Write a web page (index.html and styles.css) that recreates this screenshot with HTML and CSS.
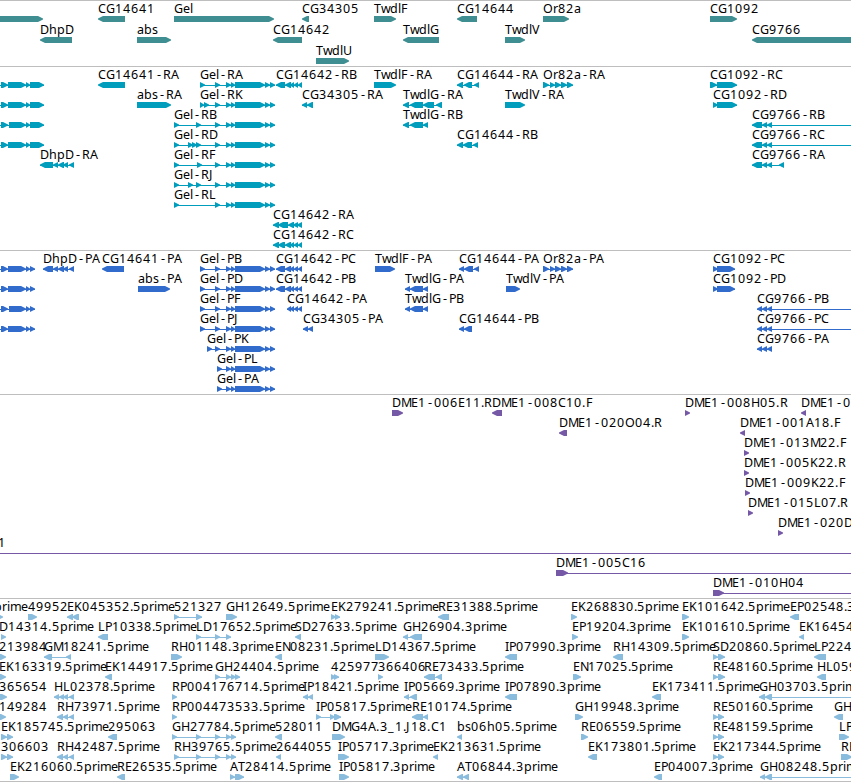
FILE: index.html
```html
<!DOCTYPE html>
<html lang="en">
<head>
    <meta charset="utf-8">
    <title>Genome Browser</title>
    <link rel="stylesheet" href="styles.css">
</head>
<body>
    <div class="browser">
        <div class="track track-gene" id="gene"></div>
        <div class="track track-mrna" id="mrna"></div>
        <div class="track track-cds" id="cds"></div>
        <div class="track track-bac" id="bac"></div>
        <div class="track track-est" id="est"></div>
    </div>

    <script src="tracks.js"></script>
</body>
</html>
```
FILE: styles.css
```css
body {
    margin: 0;
    padding: 0;
    background-color: #fff;
    overflow: hidden;
}

.browser {
    display: flex;
    flex-direction: column;
    width: 851px;
    height: 782px;
    overflow: hidden;
}

.track {
    box-sizing: border-box;
    border-top: 1px solid #bebebe;
    overflow: hidden;
}

.track svg {
    display: block;
    width: 851px;
    height: 100%;
}

.track text {
    font-family: "Noto Sans", "DejaVu Sans", sans-serif;
    font-size: 12.5px;
    fill: #000;
}

.track-gene {
    height: 66px;
    color: #3f8f92;
}

.track-mrna {
    height: 184px;
    color: #009dbd;
}

.track-cds {
    height: 144px;
    color: #316ccc;
}

.track-bac {
    height: 204px;
    color: #7558a6;
}

.track-est {
    height: 184px;
    color: #89bcdd;
    border-bottom: 1px solid #bebebe;
}

.block {
    fill: currentColor;
}

.intron {
    stroke: currentColor;
    stroke-width: 1;
    shape-rendering: crispEdges;
}
```
FILE: tracks.js
```js
// each line: row label strand blocks   ("." = no label, label@x = label not at feature start)
const tracks = {
    gene: `
0 . + -10-43
0 CG14641 - 98-125
0 Gel + 174-274
0 CG34305 - 302-309
0 TwdlF + 374-396
0 CG14644 - 457-477
0 Or82a + 543-569
0 CG1092 + 710-737
1 DhpD - 40-72
1 abs + 137-171
1 CG14642 - 273-302
1 TwdlG - 403-439
1 TwdlV + 505-525
1 CG9766 - 752-870
2 TwdlU + 316-349`,
    mrna: `
0 . + -10--5 1-8 8-26 26-30 30-44
1 . + -10--5 1-8 8-26 26-30 30-44
2 . + -10--5 1-8 9-26 26-30 30-44
3 . + -10--5 1-8 8-26 26-30 30-44
0 CG14641-RA - 98-125
0 Gel-RA + 200-205 215-220 226-231 231-235 235-265 265-270 270-275
0 CG14642-RB - 276-285 285-291 290-294 294-298 298-302
0 TwdlF-RA + 374-396
0 CG14644-RA - 457-463 464-472 474-479
0 Or82a-RA + 543-549 550-555 555-561 561-567 567-573
0 CG1092-RC + 710-717 717-737
1 abs-RA + 137-171
1 Gel-RK + 200-204 204-209 215-220 226-231 231-235 235-265 265-270 270-275
1 CG34305-RA - 302-307 307-313
1 TwdlG-RA - 403-409 410-423 423-434 436-442
1 TwdlV-RA + 505-525
1 CG1092-RD + 713-718 717-737
2 Gel-RB + 174-179 196-201 215-220 226-231 231-235 235-265 265-270 270-275
2 TwdlG-RB - 403-409 410-423 423-428
2 CG9766-RB - 752-762 762-767 767-772 860-865
3 Gel-RD + 174-179 188-193 192-197 196-201 215-220 226-231 231-235 235-265 265-270 270-275
3 CG14644-RB - 457-463 463-472 473-478
3 CG9766-RC - 752-762 762-767 767-772 860-865
4 DhpD-RA - 40-53 53-58 58-64 63-68 69-74
4 Gel-RF + 174-179 197-202 215-220 226-231 231-235 235-265 265-270 270-275
4 CG9766-RA - 752-762 762-767 767-772 779-784
5 Gel-RJ + 174-179 188-193 196-201 215-220 226-231 231-235 235-265 265-270 270-275
6 Gel-RL + 174-179 215-220 226-231 231-235 235-265 265-270 270-275
7 CG14642-RA - 273-279 278-288 288-294 293-298 297-302
8 CG14642-RC - 273-279 278-285 285-291 290-294 294-298 298-302`,
    cds: `
0 . + -10--5 1-8 8-26 26-30 30-35
1 . + -10--5 1-8 8-26 26-30 30-35
2 . + -10--5 1-8 9-26 26-30 30-35
3 . + -10--5 1-8 8-26 26-30 30-35
0 DhpD-PA - 43-53 53-58 58-64 63-68 69-74
0 CG14641-PA - 102-124
0 Gel-PB + 200-205 215-220 226-231 231-235 235-265 265-270 270-275
0 CG14642-PC - 276-285 285-291 290-294 294-298 298-302
0 TwdlF-PA + 375-395
0 CG14644-PA - 459-464 464-473 474-479
0 Or82a-PA + 543-549 550-555 555-561 561-567 567-573
0 CG1092-PC + 713-718 717-735
1 abs-PA + 138-170
1 Gel-PD + 200-205 215-220 226-231 231-235 235-265 265-270 270-275
1 CG14642-PB - 276-285 285-291 290-294 294-298 298-302
1 TwdlG-PA - 405-410 410-423 423-428
1 TwdlV-PA + 506-520
1 CG1092-PD + 713-718 717-735
2 Gel-PF + 200-205 215-220 226-231 231-235 235-265 265-270 270-275
2 CG14642-PA - 287-291 290-294 294-298 298-302
2 TwdlG-PB - 405-410 410-423 423-428
2 CG9766-PB - 757-762 762-767 767-772 860-865
3 Gel-PJ + 200-205 215-220 226-231 231-235 235-265 265-270 270-275
3 CG34305-PA - 303-308 308-313
3 CG14644-PB - 459-464 464-472
3 CG9766-PC - 757-762 762-767 767-772 860-865
4 Gel-PK + 207-212 215-220 226-231 231-235 235-265 265-270 270-275
4 CG9766-PA - 757-762 762-767 767-772
5 Gel-PL + 217-222 226-231 231-235 235-265 265-270 270-275
6 Gel-PA + 217-222 226-231 231-235 235-265 265-270 270-275`,
    bac: `
0 DME1-006E11.R + 392-403
0 DME1-008C10.F - 492-502
0 DME1-008H05.R + 685-690
0 DME1-0 - 801-806
1 DME1-020O04.R - 559-567
1 DME1-001A18.F - 740-745
2 DME1-013M22.F + 744-749
3 DME1-005K22.R + 744-749
4 DME1-009K22.F + 745-750
5 DME1-015L07.R + 748-753
6 DME1-020D + 778-783
7 1@-2 + -10--5 860-865
8 DME1-005C16 + 556-568 860-865
9 DME1-010H04 + 713-724 860-865`,
    est: `
0 prime@-6 + -5-3
0 49952 + 28-37
0 EK045352.5prime - 67-73 72-79
0 521327 + 174-179 196-202
0 GH12649.5prime + 226-237
0 EK279241.5prime + 331-336 335-340
0 RE31388.5prime - 438-449
0 EK268830.5prime + 571-577
0 EK101642.5prime + 682-689
0 EP02548.3 - 790-799
1 D14314.5prime@-1 + 1-6
1 LP10338.5prime - 98-108
1 LD17652.5prime + 196-201 215-220 226-231
1 SD27633.5prime - 295-301
1 GH26904.3prime - 403-408 410-422
1 EP19204.3prime + 572-578
1 EK101610.5prime + 682-689
1 EK16454 - 799-804
2 213984@-1 + 0-6
2 GM18241.5prime - 44-52 66-71
2 RH01148.3prime + 171-182
2 EN08231.5prime - 275-282
2 LD14367.5prime + 375-389
2 IP07990.3prime - 505-517
2 RH14309.5prime - 613-623
2 SD20860.5prime + 713-718 718-725
2 LP224 - 814-826
3 EK163319.5prime@-1 + 0-6
3 EK144917.5prime - 105-112
3 GH24404.5prime + 215-220 226-231 231-236 235-240
3 425977 + 331-336 334-339
3 366406 + 378-383
3 RE73433.5prime - 424-435 436-442
3 EN17025.5prime + 573-581
3 RE48160.5prime + 713-718 718-725
3 HL059 - 817-826
4 365654@-1 + 0-7
4 HL02378.5prime - 54-59 59-64 63-68 69-74
4 RP004176714.5prime + 172-177
4 IP18421.5prime - 303-308 308-313
4 IP05669.3prime - 404-409 410-417
4 IP07890.3prime - 505-517
4 EK173411.5prime - 652-661
4 GH03703.5prim - 759-765 765-772 860-865
5 149284@-1 + 0-6
5 RH73971.5prime - 57-63 63-68 69-74
5 RP004473533.5prime + 172-177
5 IP05817.5prime + 316-321 330-335 334-341
5 RE10174.5prime - 412-423 423-428
5 GH19948.3prime + 575-583
5 RE50160.5prime + 713-718 718-724
5 GH - 834-843
6 EK185745.5prime + 1-7 7-13
6 295063 - 108-117
6 GH27784.5prime + 172-177 196-201 215-220 226-231 231-236
6 528011 - 275-282
6 DMG4A.3_1.J18.C1 + 332-345
6 bs06h05.5prime - 457-462
6 RE06559.5prime + 581-588
6 RE48159.5prime + 713-718 718-724
6 LP + 839-849
7 306603 + 1-7 7-13
7 RH42487.5prime - 57-63 63-68 69-74
7 RH39765.5prime + 174-179 196-201 215-220 226-231 231-236
7 2644055 - 276-281
7 IP05717.3prime + 338-349
7 EK213631.5prime - 433-438
7 EK173801.5prime - 588-597
7 EK217344.5prime + 713-718 718-724
7 RE + 841-852
8 EK216060.5prime + 10-19
8 RE26535.5prime - 117-125
8 AT28414.5prime + 230-235 235-244
8 IP05817.3prime + 339-349
8 AT06844.3prime - 457-463 463-469
8 EP04007.3prime - 654-662
8 GH08248.5prim - 760-765 765-772 860-865`
};

// label letter widths in px, everything else is 8
const widths = { C: 8, G: 9, D: 9, E: 6.6, L: 6.6, F: 7, T: 7, P: 7, I: 3.5, J: 5, H: 9, M: 10.4, O: 9.5, S: 7, U: 8,
                 e: 7, l: 3, r: 5, i: 3, m: 11, w: 9, a: 7, s: 6, ".": 3.5, "_": 7 };

function labelPositions(label, x) {
    const list = [];
    for (const ch of label) {
        // the hyphen glyph is narrow, centre it in its cell
        list.push(Math.round(ch === "-" ? x + 2 : x));
        x += widths[ch] || 8;
    }
    return list.join(" ");
}

// a block is a bar with a 5px arrow head on the strand side
function blockPoints(a, b, y, strand) {
    const head = Math.min(5, b - a);
    if (strand === "+") {
        return `${a},${y} ${b - head},${y} ${b},${y + 2.6} ${b},${y + 3.4} ${b - head},${y + 6} ${a},${y + 6}`;
    }
    return `${b},${y} ${a + head},${y} ${a},${y + 2.6} ${a},${y + 3.4} ${a + head},${y + 6} ${b},${y + 6}`;
}

function drawTrack(id) {
    const rowHeight = id === "gene" ? 21 : 20;
    let out = "";
    tracks[id].trim().split("\n").forEach(line => {
        const [row, name, strand, ...rest] = line.split(" ");
        const blocks = rest.map(r => r.match(/^(-?\d+)-(-?\d+)$/).slice(1).map(Number));
        const [label, at] = name.split("@");
        const y = row * rowHeight + 15;
        if (blocks.length > 1) {
            out += `<line class="intron" x1="${blocks[0][0]}" x2="${blocks[blocks.length - 1][1]}" y1="${y + 3.5}" y2="${y + 3.5}"/>`;
        }
        blocks.forEach(([a, b]) => {
            out += `<polygon class="block" points="${blockPoints(a, b, y, strand)}"/>`;
        });
        if (label !== ".") {
            const x = at === undefined ? blocks[0][0] : Number(at);
            out += `<text x="${labelPositions(label, x)}" y="${y - 3}">${label}</text>`;
        }
    });
    document.getElementById(id).innerHTML = `<svg>${out}</svg>`;
}

Object.keys(tracks).forEach(drawTrack);
```
